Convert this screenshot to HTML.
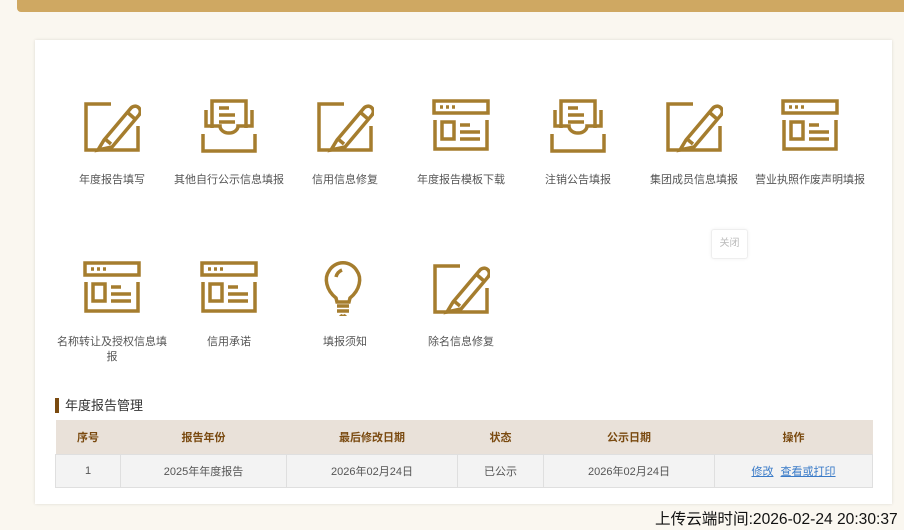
<!DOCTYPE html>
<html><head><meta charset="utf-8"><style>
body{margin:0;width:904px;height:530px;background:#faf7f0;font-family:"Liberation Sans","Noto Sans CJK SC",sans-serif;position:relative;overflow:hidden}
.top{position:absolute;left:17px;top:0;width:887px;height:12px;background:#cfa862;border-bottom-left-radius:4px}
.card{position:absolute;left:35px;top:40px;width:857px;height:464px;background:#fff;box-shadow:0 0 3px rgba(0,0,0,.12)}
.it{position:absolute;width:120px;text-align:center;font-size:11px;color:#555;line-height:15px}
.it svg{display:block;margin:0 auto 19px}
.close{position:absolute;left:711px;top:229px;width:35px;height:28px;border:1px solid #eee;border-radius:3px;font-size:10px;color:#bbb;text-align:center;line-height:28px;box-shadow:0 0 3px rgba(0,0,0,.06)}
.ttl{position:absolute;left:55px;top:398px;font-size:13px;color:#333;border-left:4px solid #7a4a10;padding-left:6px;line-height:15px}
table{position:absolute;left:55px;top:420px;width:818px;border-collapse:collapse;font-size:11px;table-layout:fixed}
th{background:#e9e1d9;color:#7a4a10;height:32px;font-weight:bold}
td{background:#f3f3f3;color:#555;height:30px;text-align:center;border:1px solid #dfdfdf}
a{color:#3a7bc8;text-decoration:underline;margin:0 2px}
.time{position:absolute;left:655px;top:507px;font-size:15.6px;color:#111;white-space:nowrap}
</style></head><body>
<div class="top"></div>
<div class="card"></div>
<svg width="0" height="0" style="position:absolute"><defs>
<g id="e" fill="none" stroke="#a57d2e" stroke-width="3.5"><path d="M28 6H3V52H55V28"/><path d="M21 42L48 10a4 4 0 0 1 8 7L29 49L15 52Z"/><path d="M44 14l8 7M22 41l6 5"/></g>
<g id="b" fill="none" stroke="#a57d2e" stroke-width="3.5"><path d="M12 30V3H46V30"/><path d="M19 10h10M19 17h16M19 24h16"/><path d="M6 12V28H20a9 7 0 0 0 18 0H52V12"/><path d="M3 36V53H55V36"/></g>
<g id="w" fill="none" stroke="#a57d2e" stroke-width="3.5"><rect x="2" y="3" width="54" height="12"/><path d="M8 9h3M14 9h3M20 9h3"/><path d="M3 22V51H55V22"/><rect x="10" y="24" width="12" height="17"/><path d="M28 27h10M28 34h20M28 41h20"/></g>
<g id="l" fill="none" stroke="#a57d2e" stroke-width="3.5"><path d="M20 38C10 30 8 18 13 11a16 16 0 0 1 28 0c5 7 3 19-7 27L33 42H21Z"/><path d="M20 17a10 10 0 0 1 6-7" /><path d="M21 46h12M21 51h12M24 55a4 4 0 0 0 6 0"/></g>
</defs></svg>
<div class="it" style="left:52px;top:98px"><svg width="58" height="56"><use href="#e"/></svg>年度报告填写</div>
<div class="it" style="left:169px;top:98px"><svg width="58" height="56"><use href="#b"/></svg>其他自行公示信息填报</div>
<div class="it" style="left:285px;top:98px"><svg width="58" height="56"><use href="#e"/></svg>信用信息修复</div>
<div class="it" style="left:401px;top:98px"><svg width="58" height="56"><use href="#w"/></svg>年度报告模板下载</div>
<div class="it" style="left:518px;top:98px"><svg width="58" height="56"><use href="#b"/></svg>注销公告填报</div>
<div class="it" style="left:634px;top:98px"><svg width="58" height="56"><use href="#e"/></svg>集团成员信息填报</div>
<div class="it" style="left:750px;top:98px"><svg width="58" height="56"><use href="#w"/></svg>营业执照作废声明填报</div>
<div class="it" style="left:52px;top:260px;width:120px"><svg width="58" height="56"><use href="#w"/></svg>名称转让及授权信息填<br>报</div>
<div class="it" style="left:169px;top:260px"><svg width="58" height="56"><use href="#w"/></svg>信用承诺</div>
<div class="it" style="left:285px;top:260px"><svg width="58" height="56"><use href="#l"/></svg>填报须知</div>
<div class="it" style="left:401px;top:260px"><svg width="58" height="56"><use href="#e"/></svg>除名信息修复</div>
<div class="close">关闭</div>
<div class="ttl">年度报告管理</div>
<table><tr><th style="width:63px">序号</th><th style="width:164px">报告年份</th><th style="width:169px">最后修改日期</th><th style="width:84px">状态</th><th style="width:169px">公示日期</th><th>操作</th></tr>
<tr><td>1</td><td>2025年年度报告</td><td>2026年02月24日</td><td>已公示</td><td>2026年02月24日</td><td><a>修改</a> <a>查看或打印</a></td></tr></table>
<div class="time">上传云端时间:2026-02-24 20:30:37</div>
</body></html>
